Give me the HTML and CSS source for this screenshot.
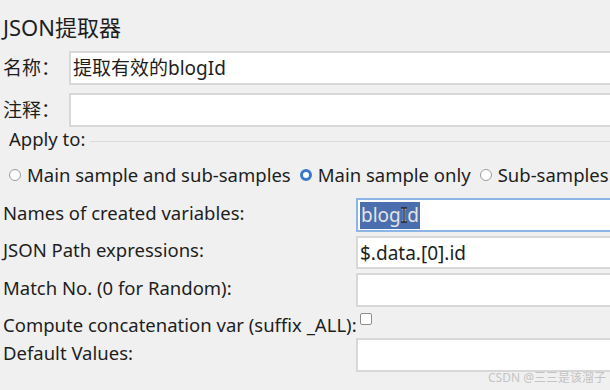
FILE: index.html
```html
<!DOCTYPE html>
<html lang="zh">
<head>
<meta charset="utf-8">
<title>JSON提取器</title>
<link rel="stylesheet" href="styles.css">
</head>
<body>
<div class="panel">
  <h1 class="title">JSON提取器</h1>
  <div class="meta-row">
    <span class="meta-label">名称：</span>
    <div class="field">提取有效的blogId</div>
  </div>
  <div class="meta-row">
    <span class="meta-label">注释：</span>
    <div class="field"></div>
  </div>
  <div class="apply">
    <div class="apply-head"><span class="apply-title">Apply to:</span><span class="apply-line"></span></div>
    <div class="radios">
      <span class="radio-item"><span class="radio"></span>Main sample and sub-samples</span>
      <span class="radio-item"><span class="radio checked"></span>Main sample only</span>
      <span class="radio-item"><span class="radio"></span>Sub-samples only</span>
    </div>
  </div>
  <div class="form">
    <span class="label">Names of created variables:</span>
    <div class="field focused"><span class="sel">blogId</span><svg class="ibeam" width="8" height="16" viewBox="0 0 8 16"><path d="M1 1h6M1 15h6M4 1v14" stroke="#222" stroke-width="1.3" fill="none"/></svg></div>
    <span class="label">JSON Path expressions:</span>
    <div class="field">$.data.[0].id</div>
    <span class="label">Match No. (0 for Random):</span>
    <div class="field"></div>
    <span class="label label-top">Compute concatenation var (suffix _ALL):</span>
    <div class="check-cell"><span class="checkbox"></span></div>
    <span class="label">Default Values:</span>
    <div class="field"></div>
  </div>
  <div class="watermark">CSDN @三三是该溜子</div>
</div>
</body>
</html>
```
FILE: styles.css
```css
html, body {
  margin: 0;
  padding: 0;
  background: #f0f0f0;
  overflow: hidden;
}
.panel {
  position: relative;
  width: 610px;
  height: 390px;
  overflow: hidden;
  font-family: "Noto Sans", "Noto Sans CJK SC", sans-serif;
  color: #1e1e1e;
  font-size: 18.5px;
}
.title {
  margin: 0;
  padding: 12px 0 0 3px;
  height: 51px;
  box-sizing: border-box;
  font-size: 22px;
  font-weight: normal;
  line-height: 30px;
}
.meta-row {
  display: flex;
  align-items: center;
  height: 34px;
}
.meta-row + .meta-row {
  margin-top: 8px;
}
.meta-label {
  width: 69px;
  padding-left: 3px;
  box-sizing: border-box;
  flex: none;
  font-size: 19px;
  line-height: 24px;
}
.field {
  position: relative;
  flex: 1;
  height: 100%;
  box-sizing: border-box;
  background: #fff;
  border: 2px solid #d8d8d8;
  border-right: none;
  padding-left: 2px;
  display: flex;
  align-items: center;
  font-size: 19px;
  line-height: 24px;
  white-space: nowrap;
}
.meta-row .field {
  margin-right: -10px;
}
.apply {
  margin-top: 2px;
}
.apply-head {
  display: flex;
  height: 20px;
  line-height: 20px;
  padding-left: 9px;
}
.apply-title {
  padding-right: 5px;
}
.apply-line {
  flex: 1;
  height: 1px;
  margin-top: 12px;
  background: #dadada;
}
.radios {
  display: flex;
  align-items: center;
  height: 20px;
  line-height: 20px;
  margin-top: 16px;
  padding-left: 9px;
  white-space: nowrap;
  gap: 9px;
}
.radio-item {
  display: flex;
  align-items: center;
  gap: 6px;
}
.radio {
  width: 12px;
  height: 12px;
  box-sizing: border-box;
  border: 1px solid #9c9c9c;
  border-radius: 50%;
  background: #fff;
  flex: none;
}
.radio.checked {
  border: 3.5px solid #3a78c9;
  background: #fff;
}
.form {
  display: grid;
  grid-template-columns: 356px 1fr;
  grid-template-rows: 34px 33px 34px 23px 34px;
  row-gap: 4px;
  margin-top: 13px;
  margin-right: -10px;
}
.label {
  padding-left: 3px;
  align-self: center;
  margin-top: -5px;
  line-height: 24px;
  white-space: nowrap;
}
.label-top {
  align-self: start;
  margin-top: 2px;
}
.field.focused {
  border-color: #8db4e6;
}
.sel {
  background: #4b6fae;
  color: #e4e4e4;
  padding: 0 1px;
  line-height: 27px;
}
.ibeam {
  position: absolute;
  left: 42px;
  top: 7px;
}
.check-cell {
  padding: 2px 0 0 4px;
  box-sizing: border-box;
}
.checkbox {
  display: block;
  width: 12px;
  height: 12px;
  box-sizing: border-box;
  border: 1px solid #8e8e8e;
  border-radius: 2px;
  background: #fff;
}
.watermark {
  position: absolute;
  left: 488px;
  top: 370px;
  font-size: 12px;
  line-height: 16px;
  color: #c4c4c4;
  white-space: nowrap;
}
```
